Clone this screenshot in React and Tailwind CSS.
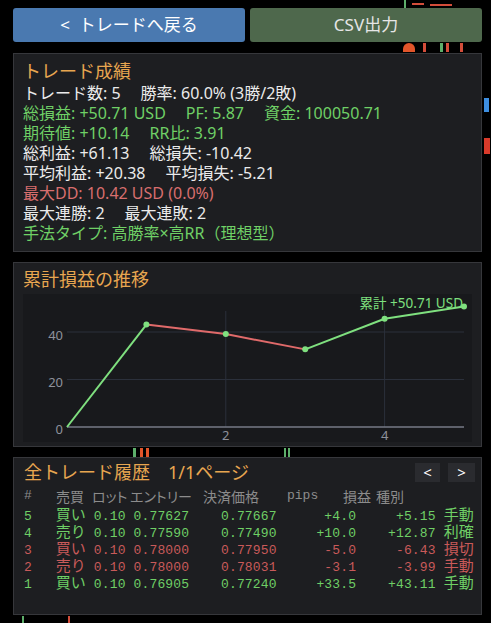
import React from "react";

const SANS = "font-['Noto_Sans','Noto_Sans_CJK_JP',sans-serif]";
const MONO = "font-['Liberation_Mono','Noto_Sans_CJK_JP',monospace]";
const CJK = "font-['Noto_Sans_CJK_JP',sans-serif]";

const trades = [
  { n: 5, side: "買い", lot: "0.10", entry: "0.77627", exit: "0.77667", pips: "+4.0", pnl: "+5.15", kind: "手動", win: true },
  { n: 4, side: "売り", lot: "0.10", entry: "0.77590", exit: "0.77490", pips: "+10.0", pnl: "+12.87", kind: "利確", win: true },
  { n: 3, side: "買い", lot: "0.10", entry: "0.78000", exit: "0.77950", pips: "-5.0", pnl: "-6.43", kind: "損切", win: false },
  { n: 2, side: "売り", lot: "0.10", entry: "0.78000", exit: "0.78031", pips: "-3.1", pnl: "-3.99", kind: "手動", win: false },
  { n: 1, side: "買い", lot: "0.10", entry: "0.76905", exit: "0.77240", pips: "+33.5", pnl: "+43.11", kind: "手動", win: true },
];

const curve = [0, 43.11, 39.12, 32.69, 45.56, 50.71];
const px = (i) => 44 + 79.4 * i;
const py = (v) => 133 - v * 2.375;

function EquityChart() {
  return (
    <svg width="449" height="148" viewBox="0 0 449 148" className="block overflow-visible">
      <line x1="44" y1={py(40)} x2="441" y2={py(40)} stroke="#2b303b" strokeWidth="1" />
      <line x1="44" y1={py(20)} x2="441" y2={py(20)} stroke="#2b303b" strokeWidth="1" />
      <line x1={px(2)} y1="17" x2={px(2)} y2="133" stroke="#2b303b" strokeWidth="1" />
      <line x1={px(4)} y1="17" x2={px(4)} y2="133" stroke="#2b303b" strokeWidth="1" />
      <line x1="44" y1="133" x2="441" y2="133" stroke="#767a86" strokeWidth="1.5" />
      <g fill="#8e919b" fontSize="13" fontFamily="Noto Sans, sans-serif">
        <text x="40" y={py(40) + 8} textAnchor="end">40</text>
        <text x="40" y={py(20) + 7} textAnchor="end">20</text>
        <text x="40" y="140" textAnchor="end">0</text>
        <text x={px(2)} y="146" textAnchor="middle">2</text>
        <text x={px(4)} y="146" textAnchor="middle">4</text>
      </g>
      {curve.slice(1).map((v, k) => {
        const prev = curve[k];
        return (
          <line
            key={k}
            x1={px(k)}
            y1={py(prev)}
            x2={px(k + 1)}
            y2={py(v)}
            stroke={v >= prev ? "#7fe07f" : "#e06a6a"}
            strokeWidth="2"
          />
        );
      })}
      {curve.slice(1).map((v, k) => (
        <circle key={k} cx={px(k + 1)} cy={py(v)} r="3" fill="#7fe07f" />
      ))}
      <text x="440" y="14" textAnchor="end" fill="#7fe07f" fontSize="13.5" fontFamily="Noto Sans, Noto Sans CJK JP, sans-serif">
        累計 +50.71 USD
      </text>
    </svg>
  );
}

function TradeRow({ t }) {
  const color = t.win ? "text-[#6fcf66]" : "text-[#c95a5a]";
  return (
    <div className={`h-[17px] whitespace-pre leading-[17px] text-[13px] tracking-[0.15px] ${MONO} ${color}`}>
      {`${t.n}   `}
      <span className={`${CJK} text-[15px] leading-[17px] tracking-normal`}>{t.side}</span>
      {` ${t.lot} ${t.entry}${t.exit.padStart(11)}${t.pips.padStart(10)}${t.pnl.padStart(10)} `}
      <span className={`${CJK} text-[15px] leading-[17px] tracking-normal`}>{t.kind}</span>
    </div>
  );
}

export default function App() {
  return (
    <div className={`relative min-h-[623px] w-[491px] bg-black overflow-hidden ${SANS}`}>
      {/* chart fragments peeking out from behind the panels */}
      <div className="absolute left-[404px] top-[0px] h-[8px] w-[2px] bg-[#5dae6a]" />
      <div className="absolute left-[412px] top-[3px] h-[2px] w-[12px] bg-[#d34d3a]" />
      <div className="absolute left-[430px] top-[4px] h-[2px] w-[22px] bg-[#d34d3a]" />
      <div className="absolute left-[403px] top-[43px] h-[9px] w-[12px] rounded-t-full bg-[#e2552a]" />
      <div className="absolute left-[423px] top-[43px] h-[9px] w-[3px] bg-[#d34d3a]" />
      <div className="absolute left-[440px] top-[43px] h-[9px] w-[3px] bg-[#5dae6a]" />
      <div className="absolute left-[446px] top-[43px] h-[9px] w-[3px] bg-[#d34d3a]" />
      <div className="absolute left-[460px] top-[43px] h-[9px] w-[3px] bg-[#d34d3a]" />
      <div className="absolute left-[484px] top-[98px] h-[14px] w-[5px] bg-[#3d8ee0]" />
      <div className="absolute left-[484px] top-[138px] h-[16px] w-[6px] bg-[#d83a2a]" />
      <div className="absolute left-[133px] top-[448px] h-[10px] w-[3px] bg-[#5dae6a]" />
      <div className="absolute left-[140px] top-[448px] h-[10px] w-[3px] bg-[#e2552a]" />
      <div className="absolute left-[146px] top-[448px] h-[10px] w-[3px] bg-[#e2552a]" />
      <div className="absolute left-[284px] top-[448px] h-[10px] w-[2px] bg-[#5dae6a]" />
      <div className="absolute left-[288px] top-[448px] h-[10px] w-[2px] bg-[#5dae6a]" />
      <div className="absolute left-[22px] top-[616px] h-[7px] w-[2px] bg-[#5dae6a]" />
      <div className="absolute left-[68px] top-[616px] h-[7px] w-[2px] bg-[#d34d3a]" />

      <div className="relative ml-[13px] w-[469px] pt-2">
        {/* header buttons */}
        <div className="grid grid-cols-2 gap-[5px]">
          <button className="h-[34px] rounded-[3px] bg-[#4a79b0] text-[17px] text-white whitespace-pre">
            {"<  トレードへ戻る"}
          </button>
          <button className="h-[34px] rounded-[3px] bg-[#4e684c] text-[17px] text-[#e6e6e6]">
            CSV出力
          </button>
        </div>

        {/* summary stats */}
        <div className="mt-[11px] border border-[#36373b] bg-[#1d1e21] px-[9px] pt-[5px] pb-[8px] text-[16px] leading-[20px]">
          <div className="text-[18px] leading-[24px] text-[#e8a650]">トレード成績</div>
          <div className="flex gap-5 text-[#ebebeb]">
            <span>トレード数: 5</span>
            <span>勝率: 60.0% (3勝/2敗)</span>
          </div>
          <div className="flex gap-5 text-[#6fd066]">
            <span>総損益: +50.71 USD</span>
            <span>PF: 5.87</span>
            <span>資金: 100050.71</span>
          </div>
          <div className="flex gap-5 text-[#6fd066]">
            <span>期待値: +10.14</span>
            <span>RR比: 3.91</span>
          </div>
          <div className="flex gap-5 text-[#ebebeb]">
            <span>総利益: +61.13</span>
            <span>総損失: -10.42</span>
          </div>
          <div className="flex gap-5 text-[#ebebeb]">
            <span>平均利益: +20.38</span>
            <span>平均損失: -5.21</span>
          </div>
          <div className="text-[#d86e6e]">最大DD: 10.42 USD (0.0%)</div>
          <div className="flex gap-5 text-[#ebebeb]">
            <span>最大連勝: 2</span>
            <span>最大連敗: 2</span>
          </div>
          <div className="text-[#6fd066]">手法タイプ: 高勝率×高RR（理想型）</div>
        </div>

        {/* equity curve */}
        <div className="mt-[10px] border border-[#36373b] bg-[#1d1e21] px-[9px] pt-[4px] pb-[4px]">
          <div className="text-[18px] leading-[24px] text-[#e8a650]">累計損益の推移</div>
          <div className="mt-[3px] bg-[#18191c]">
            <EquityChart />
          </div>
        </div>

        {/* trade history */}
        <div className="mt-[10px] border border-[#36373b] bg-[#1d1e21] pl-[10px] pr-[6px] pt-[3px] pb-[24px]">
          <div className="flex h-[22px] items-center justify-between">
            <div className="text-[18px] leading-[22px] text-[#e8a650]">全トレード履歴　1/1ページ</div>
            <div className="flex gap-2">
              <button className="h-[19px] w-[25px] bg-[#2a2b2f] text-[15px] leading-[19px] text-white">&lt;</button>
              <button className="h-[19px] w-[27px] bg-[#2a2b2f] text-[15px] leading-[19px] text-white">&gt;</button>
            </div>
          </div>
          <div className={`mt-[4px] flex h-[18px] items-center whitespace-nowrap text-[14px] leading-[18px] text-[#8c8c8c] ${CJK}`}>
            <span className={`w-[32px] shrink-0 ${MONO} text-[13px]`}>#</span>
            <span className="w-[36px] shrink-0">売買</span>
            <span className="w-[38px] shrink-0 [font-feature-settings:'palt']">ロット</span>
            <span className="w-[73px] shrink-0 [font-feature-settings:'palt']">エントリー</span>
            <span className="w-[84px] shrink-0">決済価格</span>
            <span className={`w-[56px] shrink-0 ${MONO} text-[13px]`}>pips</span>
            <span className="w-[33px] shrink-0">損益</span>
            <span className="shrink-0">種別</span>
          </div>
          {trades.map((t) => (
            <TradeRow key={t.n} t={t} />
          ))}
        </div>
      </div>
    </div>
  );
}
